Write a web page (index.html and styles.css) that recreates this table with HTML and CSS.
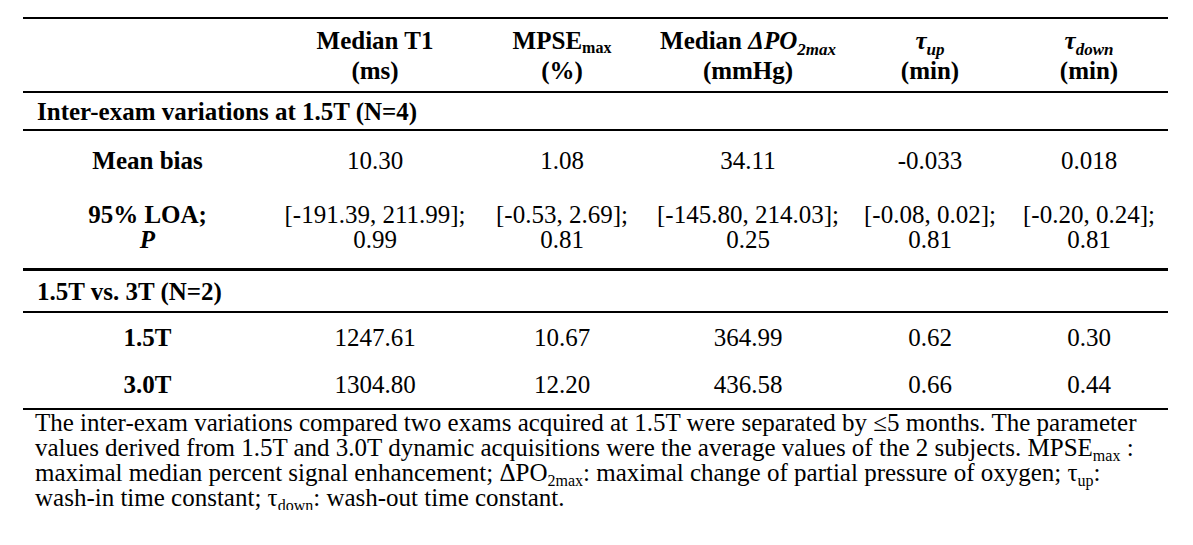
FILE: index.html
```html
<!DOCTYPE html>
<html>
<head>
<meta charset="utf-8">
<link rel="stylesheet" href="styles.css">
</head>
<body>
<div class="page">
  <table class="data">
    <colgroup>
      <col class="c1"><col class="c2"><col class="c3"><col class="c4"><col class="c5"><col class="c6">
    </colgroup>
    <thead>
      <tr class="head">
        <th></th>
        <th>Median T1<br>(ms)</th>
        <th>MPSE<sub class="sb">max</sub><br>(%)</th>
        <th>Median <i>ΔPO<sub class="si">2max</sub></i><br>(mmHg)</th>
        <th><i>τ<sub class="si">up</sub></i><br>(min)</th>
        <th><i>τ<sub class="si">down</sub></i><br>(min)</th>
      </tr>
    </thead>
    <tbody>
      <tr class="section s1">
        <td colspan="6">Inter-exam variations at 1.5T (N=4)</td>
      </tr>
      <tr class="bias">
        <th>Mean bias</th>
        <td>10.30</td><td>1.08</td><td>34.11</td><td>-0.033</td><td>0.018</td>
      </tr>
      <tr class="loa">
        <th>95% LOA;<br><i>P</i></th>
        <td>[-191.39, 211.99];<br>0.99</td>
        <td>[-0.53, 2.69];<br>0.81</td>
        <td>[-145.80, 214.03];<br>0.25</td>
        <td>[-0.08, 0.02];<br>0.81</td>
        <td>[-0.20, 0.24];<br>0.81</td>
      </tr>
      <tr class="section s2">
        <td colspan="6">1.5T vs. 3T (N=2)</td>
      </tr>
      <tr class="val v1">
        <th>1.5T</th>
        <td>1247.61</td><td>10.67</td><td>364.99</td><td>0.62</td><td>0.30</td>
      </tr>
      <tr class="val v2">
        <th>3.0T</th>
        <td>1304.80</td><td>12.20</td><td>436.58</td><td>0.66</td><td>0.44</td>
      </tr>
    </tbody>
  </table>
  <p class="note">The inter-exam variations compared two exams acquired at 1.5T were separated by ≤5 months. The parameter<br>values derived from 1.5T and 3.0T dynamic acquisitions were the average values of the 2 subjects. MPSE<sub class="ns">max</sub> :<br>maximal median percent signal enhancement; ΔPO<sub class="ns">2max</sub>: maximal change of partial pressure of oxygen; τ<sub class="ns">up</sub>:<br>wash-in time constant; τ<sub class="ns">down</sub>: wash-out time constant.</p>
</div>
</body>
</html>
```

FILE: styles.css
```css
html, body {
  margin: 0;
  padding: 0;
  background: #ffffff;
}
body {
  font-family: "Liberation Serif", "Times New Roman", serif;
  color: #000000;
  font-size: 25px;
}
.page {
  padding: 17px 0 0 23px;
  width: 1145px;
}
.data {
  border-collapse: collapse;
  table-layout: fixed;
  width: 1145px;
}
.c1 { width: 249px; }
.c2 { width: 206px; }
.c3 { width: 168px; }
.c4 { width: 204px; }
.c5 { width: 160px; }
.c6 { width: 158px; }
.data th, .data td {
  padding: 0;
  text-align: center;
  vertical-align: middle;
  font-weight: normal;
  white-space: nowrap;
  line-height: 25px;
}
.data th {
  font-weight: bold;
}
.head th {
  border-top: 2px solid #000;
  border-bottom: 2px solid #000;
  height: 70px;
  line-height: 30px;
  padding-top: 2px;
}
sub {
  line-height: 0;
}
.sb {
  font-size: 16px;
  font-weight: bold;
  vertical-align: -4px;
}
.si {
  font-size: 17px;
  vertical-align: -6px;
}
.section td {
  text-align: left;
  font-weight: bold;
  padding-left: 14px;
  border-bottom: 2px solid #000;
}
.s1 td { height: 36px; }
.s2 td { height: 40px; }
.bias th, .bias td {
  height: 58px;
}
.loa th, .loa td {
  height: 75px;
  padding-bottom: 4px;
  border-bottom: 3px solid #000;
}
.v1 th, .v1 td { height: 48px; }
.v2 th, .v2 td {
  height: 47px;
  border-bottom: 2px solid #000;
}
.note {
  margin: 0 0 0 12px;
  line-height: 25px;
  white-space: nowrap;
}
.ns {
  font-size: 16px;
  vertical-align: -5px;
}
```
